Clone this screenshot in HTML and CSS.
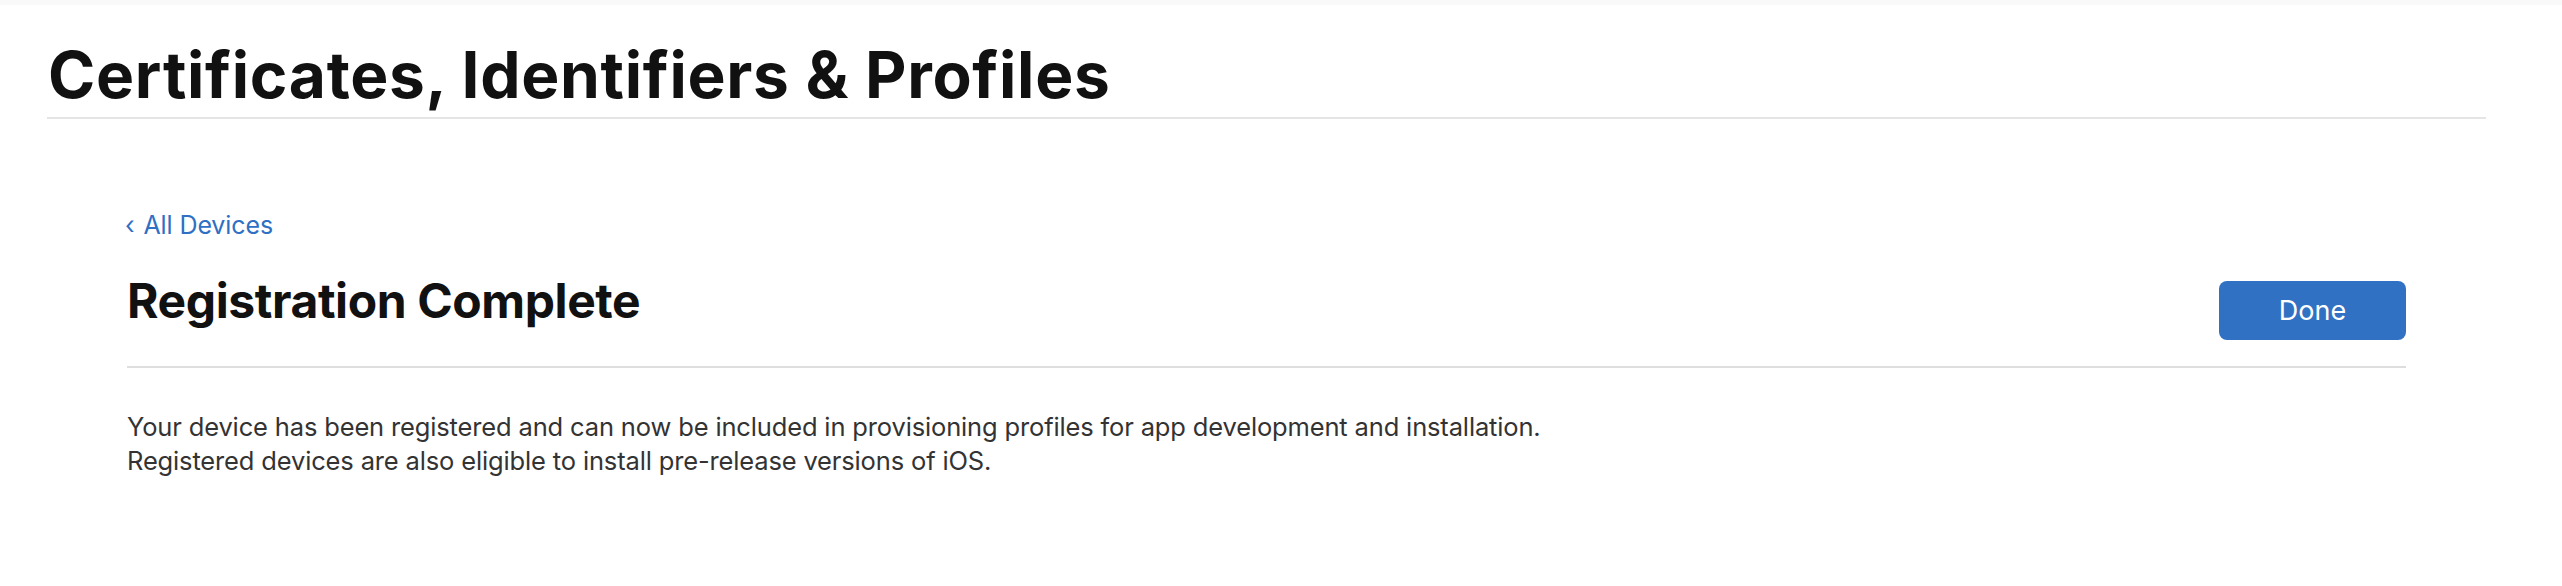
FILE: index.html
```html
<!DOCTYPE html>
<html lang="en">
<head>
<meta charset="utf-8">
<title>Certificates, Identifiers &amp; Profiles</title>
<link rel="stylesheet" href="styles.css">
</head>
<body>
<div class="topbar"></div>
<header class="page-header">
  <h1 class="page-title">Certificates, Identifiers &amp; Profiles</h1>
</header>
<main class="content">
  <a class="back-link" href="#"><span class="chev">&#8249;</span> All Devices</a>
  <div class="section-head">
    <h2 class="section-title">Registration Complete</h2>
    <button class="btn-done" type="button">Done</button>
  </div>
  <p class="desc">Your device has been registered and can now be included in provisioning profiles for app development and installation.<br>Registered devices are also eligible to install pre-release versions of iOS.</p>
</main>
</body>
</html>
```
FILE: styles.css
```css
html, body {
  margin: 0;
  padding: 0;
  background: #fff;
}
body {
  font-family: Inter, "Noto Sans", "Liberation Sans", sans-serif;
  color: #1d1d1f;
}
.topbar {
  height: 5px;
  background: #f9f9f9;
}
.page-header {
  margin: 35px 76px 0 47px;
  padding: 0 0 7px 1px;
  border-bottom: 2px solid #e5e5e5;
}
.page-title {
  margin: 0;
  font-size: 64px;
  line-height: 70px;
  font-weight: 700;
  color: #111;
  letter-spacing: 0.7px;
}
.content {
  margin: 0 156px 0 127px;
}
.back-link {
  display: block;
  margin: 89px 0 0 -2px;
  font-size: 25px;
  line-height: 34px;
  color: #2f6fc4;
  text-decoration: none;
  letter-spacing: -0.1px;
}
.chev {
  display: inline-block;
  margin-right: 2px;
}
.section-head {
  display: flex;
  justify-content: space-between;
  align-items: flex-start;
  padding-bottom: 26px;
  border-bottom: 2px solid #dedede;
}
.section-title {
  margin: 32px 0 0 0;
  font-size: 48px;
  line-height: 54px;
  font-weight: 700;
  color: #111;
  letter-spacing: -0.4px;
}
.btn-done {
  margin-top: 39px;
  width: 187px;
  height: 59px;
  border: 0;
  border-radius: 8px;
  background: #3071c4;
  color: #fff;
  font-family: inherit;
  font-size: 27px;
  font-weight: 400;
  padding: 0;
  cursor: pointer;
}
.desc {
  margin: 42px 0 0 0;
  font-size: 25.5px;
  line-height: 34px;
  color: #333;
  letter-spacing: -0.15px;
}
```
